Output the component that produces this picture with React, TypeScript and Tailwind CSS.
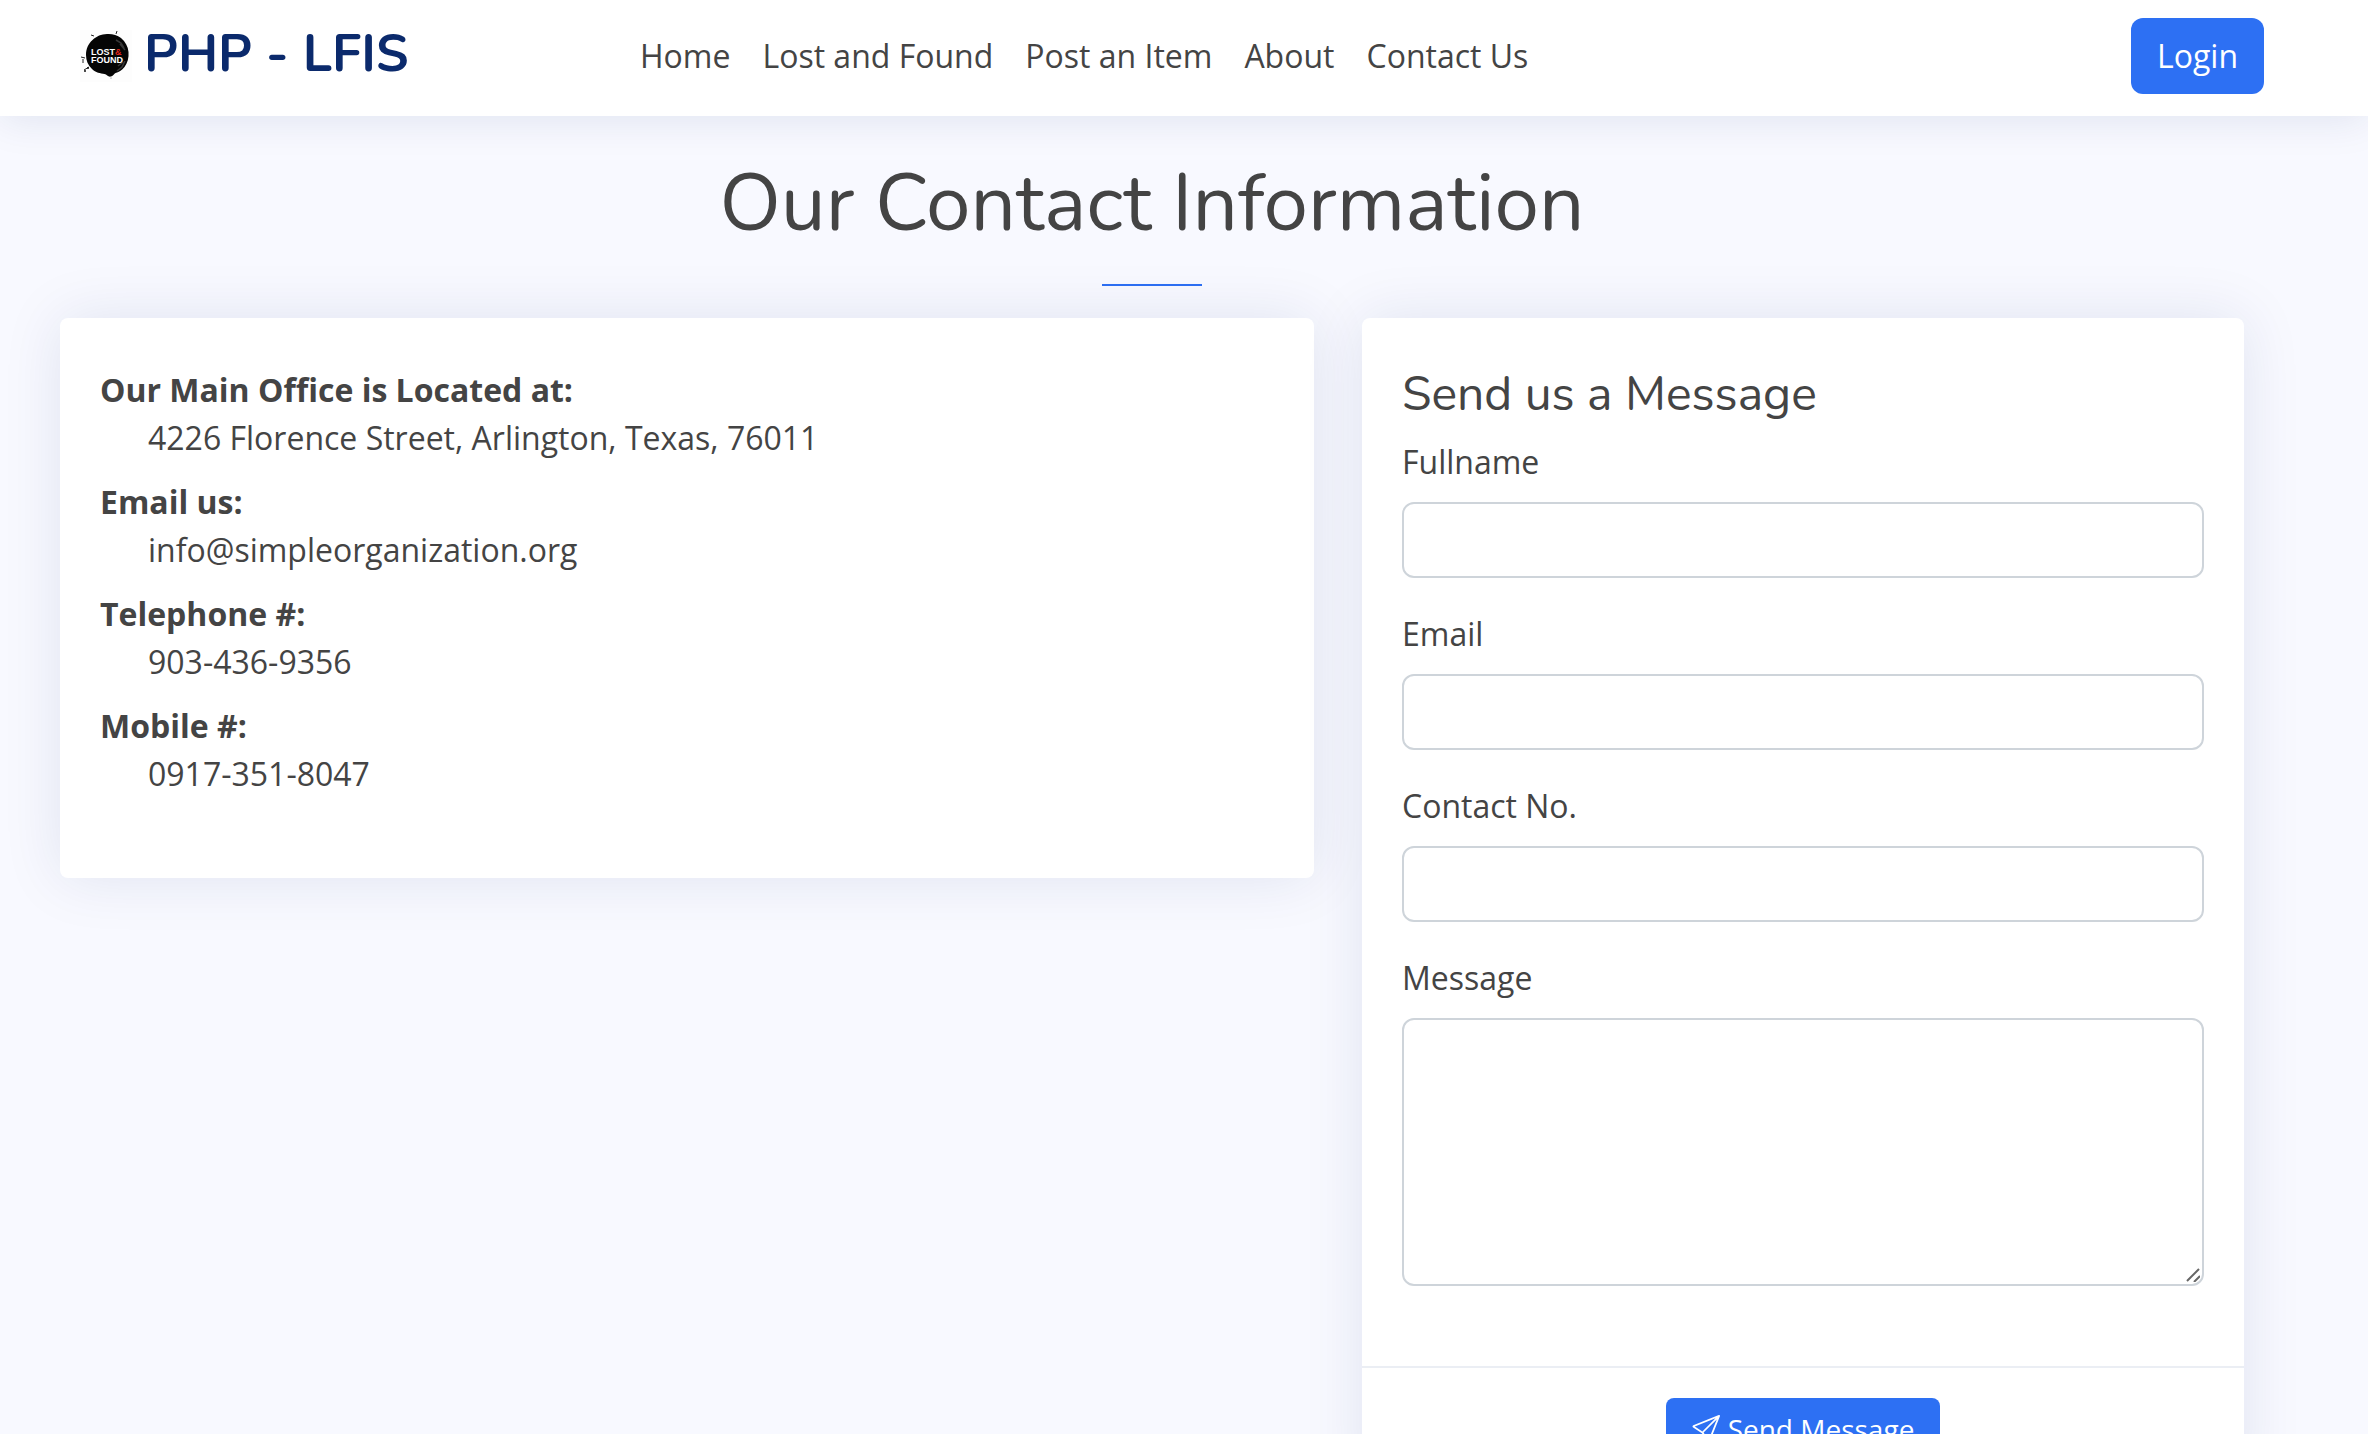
import React, { useState } from "react";
import { BsSend } from "react-icons/bs";

const navLinks = [
  { label: "Home", href: "#home" },
  { label: "Lost and Found", href: "#items" },
  { label: "Post an Item", href: "#post" },
  { label: "About", href: "#about" },
  { label: "Contact Us", href: "#contact" },
];

const contactInfo = [
  { label: "Our Main Office is Located at:", value: "4226 Florence Street, Arlington, Texas, 76011" },
  { label: "Email us:", value: "info@simpleorganization.org" },
  { label: "Telephone #:", value: "903-436-9356" },
  { label: "Mobile #:", value: "0917-351-8047" },
];

const fields = [
  { id: "fullname", label: "Fullname", type: "text" },
  { id: "email", label: "Email", type: "email" },
  { id: "contact", label: "Contact No.", type: "text" },
];

function Logo() {
  return (
    <svg viewBox="0 0 52 52" className="size-[52px] shrink-0" aria-hidden="true">
      <rect width="52" height="52" fill="#fdfdfd" />
      <path
        d="M27 4c5-.4 10 1 14 4 4.500 4 7 8.500 7.500 14 .5 6-1 11-4 15-2.500 3.500-6 5-9 6-1.500.5-2 3-4.500 3.500-3 .8-4-2-6.500-2.500-4-.5-9-1.500-12.500-5C8 35.500 6 30.500 6 25c0-6 2-11 6.500-15C17 6 21 4.200 27 4z"
        fill="#050505"
      />
      <path d="M36 10l5 3 3 5M45 31l-3 6-5 4M40 14l5 6M38 36l5-4" stroke="#383838" strokeWidth="1.500" fill="none" />
      <path d="M1 27l4 1M3 29v4M4 40l5-3M14 6l-3-1M36 4l1-3" stroke="#222" strokeWidth="1" />
      <circle cx="5" cy="41" r="1" fill="#111" />
      <circle cx="8" cy="38" r="1" fill="#111" />
      <circle cx="31" cy="48" r="0.500" fill="#555" />
      <text x="11" y="25" fontSize="9" fontWeight="700" fontFamily="'Liberation Sans', Arial, sans-serif" fill="#fff">
        LOST<tspan fill="#e0241b">&amp;</tspan>
      </text>
      <text x="11" y="33" fontSize="9" fontWeight="700" fontFamily="'Liberation Sans', Arial, sans-serif" fill="#fff">
        FOUND
      </text>
    </svg>
  );
}

function Header() {
  return (
    <header className="relative z-10 flex items-center bg-white pt-[18px] pr-[104px] pb-[22px] pl-20 shadow-[0_4px_40px_rgba(1,41,112,0.1)]">
      <a href="#home" className="flex w-[560px] shrink-0 items-center gap-3">
        <Logo />
        <span className="pb-1 font-['Nunito','Lato',sans-serif] text-[52px] leading-[60px] font-bold text-[#0b2a6c]">
          PHP - LFIS
        </span>
      </a>
      <nav>
        <ul className="flex gap-8">
          {navLinks.map((link) => (
            <li key={link.label}>
              <a href={link.href}>{link.label}</a>
            </li>
          ))}
        </ul>
      </nav>
      <button type="button" className="ml-auto rounded-xl bg-[#2d70f3] px-[26px] py-[14px] text-white">
        Login
      </button>
    </header>
  );
}

function ContactCard() {
  return (
    <section className="rounded-lg bg-white px-10 pt-12 pb-16 shadow-[0_0_60px_rgba(1,41,112,0.1)]">
      <dl>
        {contactInfo.map((item) => (
          <React.Fragment key={item.label}>
            <dt className="font-bold">{item.label}</dt>
            <dd className="mb-4 pl-12">{item.value}</dd>
          </React.Fragment>
        ))}
      </dl>
    </section>
  );
}

function MessageForm() {
  const [values, setValues] = useState<Record<string, string>>({});

  const update = (id: string, value: string) => setValues((prev) => ({ ...prev, [id]: value }));

  return (
    <form
      onSubmit={(e) => e.preventDefault()}
      className="rounded-lg bg-white shadow-[0_0_60px_rgba(1,41,112,0.1)]"
    >
      <div className="px-10 pt-12 pb-20">
        <h3 className="mb-4 font-['Nunito','Lato',sans-serif] text-5xl leading-[56px]">Send us a Message</h3>
        <div className="flex flex-col gap-8">
          {fields.map((field) => (
            <div key={field.id}>
              <label htmlFor={field.id} className="mb-4 block">
                {field.label}
              </label>
              <input
                id={field.id}
                type={field.type}
                value={values[field.id] ?? ""}
                onChange={(e) => update(field.id, e.target.value)}
                className="block h-[76px] w-full rounded-xl border-2 border-[#ced4da] bg-white px-6"
              />
            </div>
          ))}
          <div>
            <label htmlFor="message" className="mb-4 block">
              Message
            </label>
            <div className="relative">
              <textarea
                id="message"
                value={values.message ?? ""}
                onChange={(e) => update("message", e.target.value)}
                className="block h-[268px] w-full resize-y rounded-xl border-2 border-[#ced4da] bg-white px-6 py-3 [&::-webkit-resizer]:hidden"
              />
              <svg viewBox="0 0 16 16" className="pointer-events-none absolute right-1 bottom-1 size-4" aria-hidden="true">
                <path d="M3 15L15 3M10 16L16 10" stroke="#666" strokeWidth="2" />
              </svg>
            </div>
          </div>
        </div>
      </div>
      <div className="flex justify-center border-t-2 border-[#ebeef4] px-10 py-[30px]">
        <button
          type="submit"
          className="flex items-center gap-2 rounded-lg bg-[#2d70f3] px-[26px] py-[10px] text-[28px] leading-[42px] text-white"
        >
          <BsSend className="size-7" />
          Send Message
        </button>
      </div>
    </form>
  );
}

export default function App() {
  return (
    <div className="min-h-screen bg-[#f8f9ff] font-['Open_Sans','Noto_Sans',sans-serif] text-[32px] leading-[48px] text-[#444444]">
      <Header />
      <main className="pt-10 pr-[124px] pb-10 pl-[60px]">
        <h1 className="text-center font-['Nunito','Lato',sans-serif] text-[80px] leading-[96px]">
          Our Contact Information
        </h1>
        <hr className="mx-auto mt-8 mb-8 w-[100px] border-t-2 border-[#2d70f3]" />
        <div className="grid grid-cols-12 items-start gap-12">
          <div className="col-span-7">
            <ContactCard />
          </div>
          <div className="col-span-5">
            <MessageForm />
          </div>
        </div>
      </main>
    </div>
  );
}
